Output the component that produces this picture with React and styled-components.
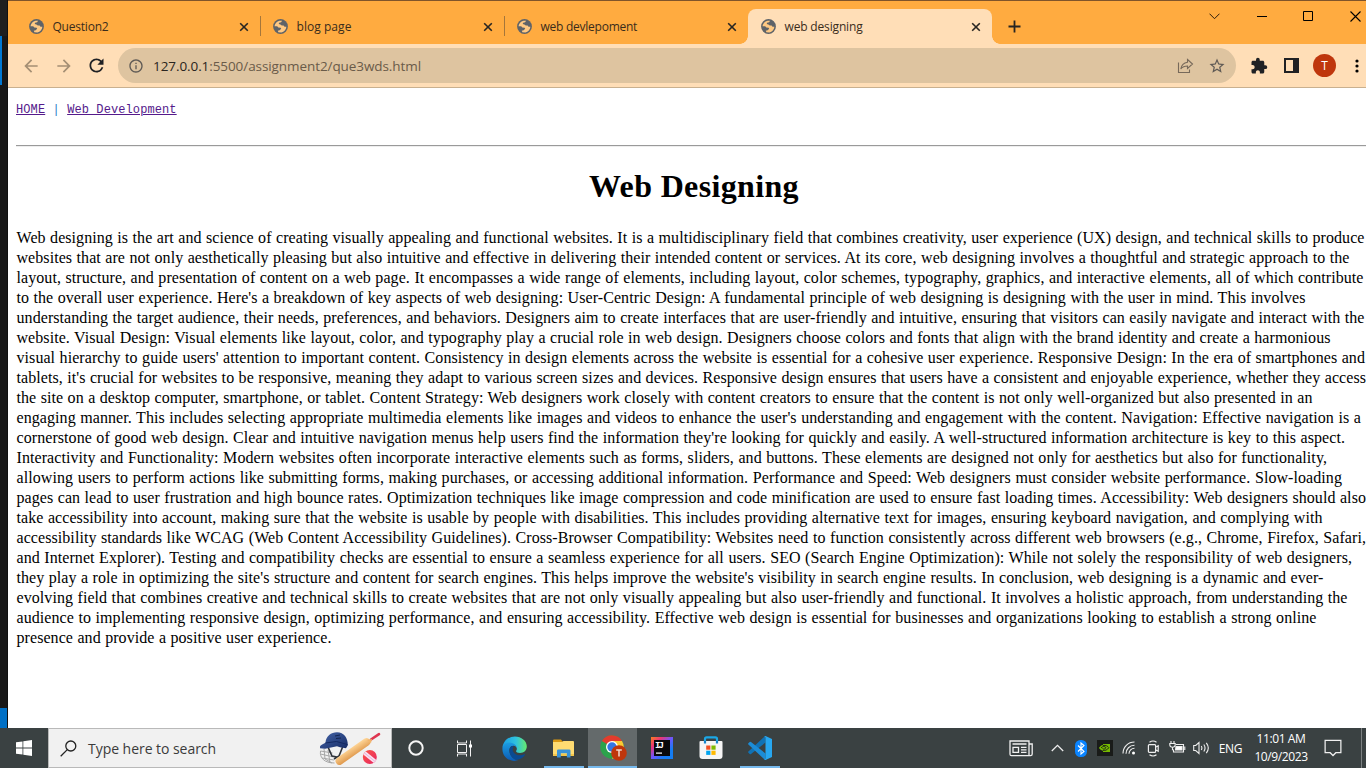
import React from 'react';
import styled, { createGlobalStyle } from 'styled-components';
import { MdExtension, MdStarBorder, MdInfoOutline, MdRefresh, MdArrowBack, MdArrowForward } from 'react-icons/md';

const GlobalStyle = createGlobalStyle`
  * { box-sizing: border-box; }
  body { margin: 0; overflow: hidden; }
`;

const ui = '"Open Sans", "Noto Sans", sans-serif';

const Desktop = styled.div`
  width: 1366px;
  height: 768px;
  overflow: hidden;
  display: flex;
  flex-direction: column;
  font-family: ${ui};
`;

const Workspace = styled.div`
  display: flex;
  height: 728px;
`;

const EditorEdge = styled.div`
  flex: 0 0 8px;
  display: flex;
  flex-direction: column;
  background: #181818;
  border-right: 1px solid #101010;
`;

const EdgeBlock = styled.div`
  height: ${(p) => p.$h}px;
  width: ${(p) => p.$w || 7}px;
  background: ${(p) => p.$bg};
`;

const Browser = styled.div`
  flex: 1;
  min-width: 0;
  display: flex;
  flex-direction: column;
  background: #fff;
`;

const TitleBar = styled.div`
  height: 44px;
  border-top: 1px solid #80542a;
  background: #ffab40;
  display: flex;
  padding: 8px 0 0 8px;
`;

const Tab = styled.div`
  position: relative;
  width: 244px;
  height: 35px;
  display: flex;
  align-items: center;
  padding: 0 10px 0 13px;
  border-radius: 8px 8px 0 0;
  background: ${(p) => (p.$active ? '#ffdeb7' : 'transparent')};

  &::before, &::after {
    content: "";
    display: ${(p) => (p.$active ? 'block' : 'none')};
    position: absolute;
    bottom: 0;
    width: 8px;
    height: 8px;
  }
  &::before { left: -8px; background: radial-gradient(circle at 0 0, transparent 7.5px, #ffdeb7 8px); }
  &::after { right: -8px; background: radial-gradient(circle at 100% 0, transparent 7.5px, #ffdeb7 8px); }
`;

const TabTitle = styled.span`
  flex: 1;
  margin-left: 8.5px;
  font-size: 12px;
  line-height: 16px;
  letter-spacing: ${(p) => p.$track}px;
  color: #3a2c1b;
  white-space: nowrap;
`;

const TabDivider = styled.span`
  position: absolute;
  right: -1px;
  top: 7px;
  width: 1px;
  height: 20px;
  background: #a5763b;
`;

const CloseSlot = styled.span`
  width: 12px;
  height: 12px;
  display: flex;
`;

const NewTab = styled.div`
  width: 45px;
  height: 35px;
  display: flex;
  align-items: center;
  justify-content: center;
`;

const WindowControls = styled.div`
  display: flex;
  margin: -2px -12.5px 0 auto;
`;

const ControlButton = styled.div`
  width: 46.8px;
  height: 18px;
  display: flex;
  align-items: center;
  justify-content: center;
`;

const Toolbar = styled.div`
  height: 44px;
  background: #ffdeb7;
  border-bottom: 1px solid #c9b08f;
  display: flex;
  align-items: center;
  padding-left: 6px;
  overflow: hidden;
`;

const ToolButton = styled.div`
  flex: 0 0 ${(p) => p.$w || 33}px;
  display: flex;
  align-items: center;
  justify-content: center;
  color: ${(p) => (p.$muted ? '#a58f74' : '#202124')};
`;

const AddressBar = styled.div`
  flex: 0 0 1118px;
  height: 35px;
  margin: 0 6px 0 5px;
  border-radius: 18px;
  background: #dec4a0;
  display: flex;
  align-items: center;
  padding: 0 10px;
  color: #5f5a55;
`;

const Url = styled.span`
  flex: 1;
  margin-left: 9px;
  font-size: 13.5px;
  letter-spacing: -0.08px;
  line-height: 20px;
  color: #6a5b49;
  white-space: nowrap;
  b { font-weight: 400; color: #2a2520; }
`;

const AddressActions = styled.div`
  display: flex;
  align-items: center;
  gap: 14px;
`;

const Avatar = styled.div`
  width: 23px;
  height: 23px;
  border-radius: 50%;
  background: #bf360c;
  color: #fff;
  font-size: 12px;
  line-height: 23px;
  text-align: center;
`;

const Page = styled.main`
  flex: 1;
  width: 1364px;
  padding: 14px 0 0 8px;
  color: #000;
  font-family: "Liberation Serif", "Times New Roman", serif;
`;

const PageNav = styled.nav`
  height: 16px;
  font: 12px/16px "Liberation Mono", monospace;
  letter-spacing: 0.1px;
  color: #2b7fc7;
  white-space: pre;
`;

const PageLink = styled.a`
  color: #551a8b;
  text-decoration: underline;
`;

const Rule = styled.div`
  margin-top: 27px;
  height: 2px;
  border-top: 1px solid #9a9a9a;
  border-bottom: 1px solid #eee;
`;

const Heading = styled.h1`
  margin: 19px 0 0;
  height: 40px;
  font-size: 32px;
  line-height: 40px;
  letter-spacing: 0.35px;
  text-align: center;
`;

const Article = styled.article`
  margin-top: 22px;
  padding-left: 0.5px;
`;

const Line = styled.div`
  width: ${(p) => p.$w}px;
  height: 20px;
  font-size: 16px;
  line-height: 20px;
  letter-spacing: 0.07px;
  text-align: justify;
  text-align-last: justify;
`;

const Taskbar = styled.footer`
  height: 40px;
  background: #3a4142;
  display: flex;
  color: #fff;
`;

const TaskSlot = styled.div`
  width: ${(p) => p.$w || 49}px;
  height: 40px;
  display: flex;
  align-items: center;
  justify-content: center;
  background: ${(p) => (p.$active ? '#646a6b' : 'transparent')};
`;

const AppSlot = styled(TaskSlot)`
  position: relative;
  &::after {
    content: "";
    position: absolute;
    bottom: 0;
    left: ${(p) => (p.$active ? 0 : 5)}px;
    right: ${(p) => (p.$active ? 0 : 4)}px;
    height: 2px;
    background: ${(p) => (p.$running ? '#76b9ed' : 'transparent')};
  }
`;

const AppGroup = styled.div`
  display: flex;
  margin-left: 2px;
`;

const SearchBox = styled.div`
  width: 344px;
  height: 40px;
  background: #f1f1f1;
  border: 1px solid #b9b9b9;
  display: flex;
  align-items: center;
  padding: 0 10px 0 11px;
`;

const SearchText = styled.span`
  flex: 1;
  margin-left: 11px;
  font-size: 14px;
  letter-spacing: -0.04px;
  color: #3b3b3b;
`;

const Tray = styled.div`
  margin-left: auto;
  display: flex;
`;

const Lang = styled(TaskSlot)`
  font-size: 12px;
  letter-spacing: -0.3px;
`;

const Clock = styled.div`
  width: 66px;
  padding-top: 2px;
  font-size: 12px;
  line-height: 18px;
  letter-spacing: ${(p) => p.$track || -0.4}px;
  text-align: center;
  white-space: nowrap;
`;

const ShowDesktop = styled.div`
  width: 5px;
  margin-left: 9px;
  border-left: 1px solid #7c8182;
`;

const Globe = () => (
  <svg width="15" height="15" viewBox="0 0 15 15">
    <circle cx="7.5" cy="7.5" r="7.4" fill="#5f6368" />
    <path d="M1.5 7.3C1.8 4.5 3.7 2.5 6.5 1.7L9 1.8 8.2 3.2 6.1 3.8 5.7 5.1 7.4 5.4 8.8 6.6 10.6 6.5 11.5 7.8 13.4 7.8C13.1 10.6 11.2 12.8 8.4 13.5L5.4 13.2 4.8 11.7 6.7 11.3 8.2 9.8 7.6 8.7 5.3 8.4 4.2 7.3Z" fill="#ffc983" />
    <path d="M9.2 2.3L11.8 3.6 13 6.2 11.8 5.6 10.2 5.2 8.3 4.8Z" fill="#5f6368" />
  </svg>
);

const CloseIcon = () => (
  <svg width="12" height="12" viewBox="0 0 12 12" stroke="#272522" strokeWidth="1.6">
    <path d="M2.2 2.2l7.6 7.6M9.8 2.2L2.2 9.8" />
  </svg>
);

const ShareIcon = () => (
  <svg width="17" height="16" viewBox="0 0 17 16" fill="none" stroke="#77695a" strokeWidth="1.1">
    <path d="M1.5 4.5v10h11v-3" />
    <path d="M10.5 1.5l5 4.5-5 4.500V8C7.500 8 5.600 8.700 3.800 11 4.400 7.300 6.700 4.700 10.500 4.200z" />
  </svg>
);

const SearchIcon = () => (
  <svg width="17" height="17" viewBox="0 0 17 17" fill="none" stroke="#222" strokeWidth="1.3">
    <circle cx="10.8" cy="6" r="5" />
    <path d="M7.3 9.6L.7 16.2" />
  </svg>
);

const CricketArt = () => (
  <svg width="62" height="36" viewBox="0 0 62 36">
    <defs>
      <linearGradient id="helmet" x1="0" y1="0" x2="1" y2="1">
        <stop offset="0" stopColor="#4565a8" /><stop offset="1" stopColor="#172c66" />
      </linearGradient>
      <linearGradient id="bat" gradientUnits="userSpaceOnUse" x1="32" y1="17" x2="37" y2="25">
        <stop offset="0" stopColor="#ffd799" /><stop offset="1" stopColor="#e09a4e" />
      </linearGradient>
      <linearGradient id="ball" x1="0" y1="0" x2="1" y2="1">
        <stop offset="0" stopColor="#ff5a45" /><stop offset="1" stopColor="#e22064" />
      </linearGradient>
      <clipPath id="ballEdge"><circle cx="50.800" cy="27" r="7" /></clipPath>
    </defs>
    <g fill="none" stroke="#a7a7a7" strokeWidth="1">
      <path d="M1.500 21c-1 7 4 12 14 12M1.500 24l13 3M3 28l12 2M5 19l1 10 7 4M9 20l2 13M1.500 21l12 2" />
    </g>
    <path d="M9 17l4 9 5 1M24 16l-4 10-5 3" fill="none" stroke="#30343b" strokeWidth="1.600" />
    <path d="M1 17C1 15 4 14.500 6.500 12.500C7 6 12 2.200 18 2.200c7 0 11 5.800 10.800 13l-1.800 3-6-1-3-1-12 2.500-5-.5z" fill="url(#helmet)" />
    <path d="M6.500 13l11-1.500 11 3" fill="none" stroke="#142a62" strokeWidth="1" />
    <path d="M16 6l5-1M17 8.500l5-.5" stroke="#142650" strokeWidth="1" />
    <path d="M52 9.500l8-5.300" stroke="#de3650" strokeWidth="2.600" strokeLinecap="round" />
    <path d="M20.500 31L47.500 12" stroke="url(#bat)" strokeWidth="7.800" strokeLinecap="round" />
    <path d="M48 10l5-1-1 4z" fill="#f2b66b" />
    <g clipPath="url(#ballEdge)">
      <path d="M43 19h16v16H43z" fill="url(#ball)" />
      <path d="M43 21l15 12" stroke="#fbe0f0" strokeWidth="4" />
      <path d="M43 21l15 12" stroke="#dba0d0" strokeWidth=".7" />
    </g>
  </svg>
);

const EdgeIcon = () => (
  <svg width="25" height="25" viewBox="0 0 256 256">
    <defs>
      <linearGradient id="e1" x1="0" y1="0" x2="1" y2="0"><stop offset="0" stopColor="#1b9de2" /><stop offset=".55" stopColor="#2fc2df" /><stop offset="1" stopColor="#66eb6e" /></linearGradient>
      <linearGradient id="e2" x1="0" y1="0" x2="0" y2="1"><stop offset="0" stopColor="#1b9de2" /><stop offset="1" stopColor="#0c5bb5" /></linearGradient>
    </defs>
    <path d="M5 118C14 45 72 4 132 4c66 0 122 45 122 102 0 43-31 68-69 68-28 0-44-10-41-19 4-7 8-13 8-24 0-27-29-47-62-47-39 0-70 15-85 34z" fill="url(#e1)" />
    <path d="M5 118c10-38 46-56 85-50 36 5 62 29 62 61 0-19-17-29-33-29-29 0-46 23-44 48 4 56 43 94 91 99-11 5-26 8-40 8C55 254-3 195 5 118z" fill="url(#e2)" />
    <path d="M95 106c-34 33-20 105 32 131 38 19 86-9 109-44 4-5-1-9-6-6-53 27-117 1-121-47-1-12 3-23 10-31-9-7-18-8-24-3z" fill="#0a4a92" />
  </svg>
);

const FolderIcon = () => (
  <svg width="22" height="19" viewBox="0 0 22 19">
    <path d="M0 1.5Q0 .5 1 .5h7l2 2.5H0z" fill="#dc9a13" />
    <path d="M0 3h9l1.5-1H20q1 0 1 1v14H0z" fill="#ffdc72" />
    <path d="M0 15h21v2H0z" fill="#f3c54a" />
    <path d="M4 18.5v-6.700q0-1.200 1.200-1.200h11q1.300 0 1.300 1.200v6.700h-3.600v-4.200H7.800v4.200z" fill="#3992d8" />
  </svg>
);

const ChromeIcon = () => (
  <svg width="28" height="28" viewBox="0 0 28 28">
    <circle cx="13" cy="13" r="11.7" fill="#2ba24c" />
    <path d="M13 13L2.9 7.1A11.7 11.7 0 0 1 23.2 7.2z" fill="#e33b2e" />
    <path d="M13 7h10A11.7 11.7 0 0 1 13 24.7L18.5 15z" fill="#fcc934" />
    <circle cx="13" cy="13" r="6" fill="#fff" />
    <circle cx="13" cy="13" r="4.7" fill="#3376e4" />
    <circle cx="20" cy="19" r="7.8" fill="#bf360c" />
    <path d="M17.2 16h5.600M20 16v6.500" stroke="#f3d9d0" strokeWidth="1.500" />
  </svg>
);

const IdeaText = styled.text`
  font: bold 9px "Liberation Mono", monospace;
  fill: #fff;
`;

const IdeaIcon = () => (
  <svg width="22" height="22" viewBox="0 0 22 22">
    <defs><linearGradient id="ij" x1="0" y1="0" x2="1" y2="1"><stop offset="0" stopColor="#fc801d" /><stop offset=".25" stopColor="#eb3576" /><stop offset=".5" stopColor="#6b57ff" /><stop offset=".75" stopColor="#147df4" /></linearGradient></defs>
    <rect width="22" height="22" fill="url(#ij)" />
    <rect x="3" y="3" width="16" height="16" fill="#090909" />
    <IdeaText x="4" y="11" textLength="9">IJ</IdeaText>
    <rect x="5" y="15.5" width="6" height="1.2" fill="#fff" />
  </svg>
);

const StoreIcon = () => (
  <svg width="24" height="24" viewBox="0 0 24 24">
    <path d="M6 7V3q0-1.6 1.6-1.6h8.8Q18 1.400 18 3v4" fill="none" stroke="#1ba7e5" strokeWidth="2.2" />
    <path d="M1.500 5h21Q23.500 5 23.500 6v14q0 3-3 3h-17q-3 0-3-3V6q0-1 1-1z" fill="#f5f5f5" />
    <path d="M6 5v2.500M18 5v2.500" stroke="#1684cc" strokeWidth="2.200" />
    <path d="M7.200 9.500h4.200v4.200H7.200z" fill="#f25022" />
    <path d="M12.400 9.500h4.200v4.200h-4.200z" fill="#7fba00" />
    <path d="M7.200 14.700h4.200v4.200H7.200z" fill="#00a4ef" />
    <path d="M12.400 14.700h4.200v4.200h-4.200z" fill="#ffb900" />
  </svg>
);

const CodeIcon = () => (
  <svg width="24" height="24" viewBox="0 0 24 24">
    <path d="M17.500 6.500L3 17.900q-.7.500-1.300 0L.4 16.700q-.6-.6 0-1.200L16.500.6q.5-.5 1-.6z" fill="#1072b5" />
    <path d="M17.500 17.500L3 6.100q-.7-.5-1.300 0L.4 7.300q-.6.600 0 1.200l16.100 14.900q.5.500 1 .6z" fill="#1c8cd6" />
    <path d="M17.500 0L24 3v18l-6.500 3q-.9-.2-1.300-.8 1.300.4 1.300-1V1.800q0-1.300-1.300-1 .6-.6 1.300-.8z" fill="#27a7f0" />
  </svg>
);

const TaskViewIcon = () => (
  <svg width="17" height="17" viewBox="0 0 17 17" fill="none" stroke="#f2f2f2">
    <path d="M1.500 .5v2.500h9V.5M1.500 4.500h9v8h-9zM1.500 16.500V14h9v2.500M14.500 .5v16" />
    <path d="M13 4.500h3v3h-3z" fill="#fff" stroke="none" />
  </svg>
);

const NewsIcon = () => (
  <svg width="24" height="17" viewBox="0 0 24 17" fill="none" stroke="#f0f0f0" strokeWidth="1.3">
    <path d="M20 15.700V1H1v13.200q0 1.500 1.500 1.500h19q1.700 0 1.700-1.700V4H20M3.500 4h14M12 7.300h5.500M12 9.800h5.500M12 12.300h5.500" />
    <path d="M4 7.300h5.500v5H4z" />
  </svg>
);

const BluetoothIcon = () => (
  <svg width="12" height="17" viewBox="0 0 12 17">
    <rect width="12" height="17" rx="5.500" fill="#0a84ff" />
    <path d="M3 5.500l6 6L6 14V3l3 2.500-6 6" fill="none" stroke="#fff" strokeWidth="1.1" />
  </svg>
);

const NvidiaIcon = () => (
  <svg width="16" height="16" viewBox="0 0 16 16">
    <rect width="16" height="16" fill="#191b19" />
    <path d="M6 4h7v8H6v-1.200C4 10.500 2.400 9 2 7.800 3.200 6 4.500 5.200 6 5z" fill="#76b900" />
    <path d="M6 5.500c3-.6 5 .8 5.800 2.200C10.300 10 8 10.800 6 10.300M4 8c1.500-2 3.800-2 5-.3C8 9.300 6.700 9.400 5.500 8.500" fill="none" stroke="#191b19" strokeWidth=".9" />
  </svg>
);

const WifiIcon = () => (
  <svg width="14" height="14" viewBox="0 0 14 14" fill="none" stroke="#eee" strokeWidth="1.100">
    <path d="M1 12.500C1 6 6 1 12.500 1M4 12.800c0-4.800 3.700-8.500 8.500-8.500M7 12.800c0-3 2.500-5.500 5.500-5.500" />
    <circle cx="11.500" cy="12" r="1.500" fill="#fff" stroke="none" />
  </svg>
);

const MeetIcon = () => (
  <svg width="13" height="17" viewBox="0 0 13 17" fill="none" stroke="#eee" strokeWidth="1.200">
    <path d="M2.500 2.200Q6 -.2 9.500 2.200M2.500 14.800q3.500 2.400 7 0M2.300 4.600h5.400q.9 0 .9.900v6q0 .9-.9.900H2.300q-.9 0-.9-.9v-6q0-.9.900-.9zM8.600 7.300l2.600-1.500v5.400L8.600 9.700" />
  </svg>
);

const BatteryIcon = () => (
  <svg width="17" height="14" viewBox="0 0 17 14" fill="none" stroke="#eee" strokeWidth="1.100">
    <path d="M7 3.500h7.500v7.500H4.500V8.500M15.800 5.500v3.500" />
    <path d="M7 5.500h6v3.500H6.500z" fill="#fff" />
    <path d="M2 0v2.500M5 0v2.500M.8 2.500h5.400v1.500Q6 6.200 3.500 6.200T.8 4zM3.500 6.200v3" />
  </svg>
);

const SpeakerIcon = () => (
  <svg width="17" height="14" viewBox="0 0 17 14" fill="none" stroke="#eee" strokeWidth="1.100">
    <path d="M.7 4.500h2L6 1.500v11l-3.300-3h-2zM8.300 5q1.200 2 0 4M10.800 3.500q2.500 3.500 0 7M13.300 1.800q4 5.200 0 10.400" />
  </svg>
);

const tabs = [
  { title: 'Question2', track: -0.22, divider: true },
  { title: 'blog page', track: 0.05, divider: true },
  { title: 'web devlepoment', track: -0.25 },
  { title: 'web designing', track: -0.16, active: true },
];

const lines = [
  [1348, 'Web designing is the art and science of creating visually appealing and functional websites. It is a multidisciplinary field that combines creativity, user experience (UX) design, and technical skills to produce'],
  [1333, 'websites that are not only aesthetically pleasing but also intuitive and effective in delivering their intended content or services. At its core, web designing involves a thoughtful and strategic approach to the'],
  [1347, 'layout, structure, and presentation of content on a web page. It encompasses a wide range of elements, including layout, color schemes, typography, graphics, and interactive elements, all of which contribute'],
  [1289, "to the overall user experience. Here's a breakdown of key aspects of web designing: User-Centric Design: A fundamental principle of web designing is designing with the user in mind. This involves"],
  [1348, 'understanding the target audience, their needs, preferences, and behaviors. Designers aim to create interfaces that are user-friendly and intuitive, ensuring that visitors can easily navigate and interact with the'],
  [1314, 'website. Visual Design: Visual elements like layout, color, and typography play a crucial role in web design. Designers choose colors and fonts that align with the brand identity and create a harmonious'],
  [1348.5, "visual hierarchy to guide users' attention to important content. Consistency in design elements across the website is essential for a cohesive user experience. Responsive Design: In the era of smartphones and"],
  [1349.5, "tablets, it's crucial for websites to be responsive, meaning they adapt to various screen sizes and devices. Responsive design ensures that users have a consistent and enjoyable experience, whether they access"],
  [1296, 'the site on a desktop computer, smartphone, or tablet. Content Strategy: Web designers work closely with content creators to ensure that the content is not only well-organized but also presented in an'],
  [1344.5, "engaging manner. This includes selecting appropriate multimedia elements like images and videos to enhance the user's understanding and engagement with the content. Navigation: Effective navigation is a"],
  [1328.5, "cornerstone of good web design. Clear and intuitive navigation menus help users find the information they're looking for quickly and easily. A well-structured information architecture is key to this aspect."],
  [1310.5, 'Interactivity and Functionality: Modern websites often incorporate interactive elements such as forms, sliders, and buttons. These elements are designed not only for aesthetics but also for functionality,'],
  [1325.5, 'allowing users to perform actions like submitting forms, making purchases, or accessing additional information. Performance and Speed: Web designers must consider website performance. Slow-loading'],
  [1349.5, 'pages can lead to user frustration and high bounce rates. Optimization techniques like image compression and code minification are used to ensure fast loading times. Accessibility: Web designers should also'],
  [1306, 'take accessibility into account, making sure that the website is usable by people with disabilities. This includes providing alternative text for images, ensuring keyboard navigation, and complying with'],
  [1349.5, 'accessibility standards like WCAG (Web Content Accessibility Guidelines). Cross-Browser Compatibility: Websites need to function consistently across different web browsers (e.g., Chrome, Firefox, Safari,'],
  [1335.5, 'and Internet Explorer). Testing and compatibility checks are essential to ensure a seamless experience for all users. SEO (Search Engine Optimization): While not solely the responsibility of web designers,'],
  [1307, "they play a role in optimizing the site's structure and content for search engines. This helps improve the website's visibility in search engine results. In conclusion, web designing is a dynamic and ever-"],
  [1331, 'evolving field that combines creative and technical skills to create websites that are not only visually appealing but also user-friendly and functional. It involves a holistic approach, from understanding the'],
  [1300, 'audience to implementing responsive design, optimizing performance, and ensuring accessibility. Effective web design is essential for businesses and organizations looking to establish a strong online'],
  [315, 'presence and provide a positive user experience.'],
];

export default function App() {
  return (
    <Desktop>
      <GlobalStyle />
      <Workspace>
        <EditorEdge>
          <EdgeBlock $h={36} $bg="#1f1f1f" />
          <EdgeBlock $h={49} $w={2} $bg="#0078d4" />
          <EdgeBlock $h={623} $bg="#181818" />
          <EdgeBlock $h={20} $bg="#0070c6" />
        </EditorEdge>
        <Browser>
          <TitleBar>
            {tabs.map((t) => (
              <Tab key={t.title} $active={t.active}>
                <Globe />
                <TabTitle $track={t.track}>{t.title}</TabTitle>
                <CloseSlot><CloseIcon /></CloseSlot>
                {t.divider && <TabDivider />}
              </Tab>
            ))}
            <NewTab>
              <svg width="13" height="13" viewBox="0 0 13 13" stroke="#272522" strokeWidth="1.800"><path d="M6.500 .5v12M.5 6.500h12" /></svg>
            </NewTab>
            <WindowControls>
              <ControlButton><svg width="11" height="7" viewBox="0 0 11 7" fill="none" stroke="#2a1c0b"><path d="M.5 .7l5 5 5-5" /></svg></ControlButton>
              <ControlButton><svg width="10" height="10" viewBox="0 0 10 10" stroke="#000"><path d="M0 5.500h10" /></svg></ControlButton>
              <ControlButton><svg width="10" height="10" viewBox="0 0 10 10" fill="none" stroke="#000"><path d="M.5 .5h9v9h-9z" /></svg></ControlButton>
              <ControlButton><svg width="11" height="11" viewBox="0 0 11 11" stroke="#000" strokeWidth="1.100"><path d="M.5 .5l10 10M10.500 .5l-10 10" /></svg></ControlButton>
            </WindowControls>
          </TitleBar>
          <Toolbar>
            <ToolButton $muted><MdArrowBack size={20} /></ToolButton>
            <ToolButton $muted><MdArrowForward size={20} /></ToolButton>
            <ToolButton><MdRefresh size={21} /></ToolButton>
            <AddressBar>
              <MdInfoOutline size={16} />
              <Url><b>127.0.0.1</b>:5500/assignment2/que3wds.html</Url>
              <AddressActions>
                <ShareIcon />
                <MdStarBorder size={18} />
              </AddressActions>
            </AddressBar>
            <ToolButton><MdExtension size={18} /></ToolButton>
            <ToolButton><svg width="15" height="15" viewBox="0 0 15 15"><path d="M0 0h15v15H0zM2 2v11h7V2z" fill="#202124" fillRule="evenodd" /></svg></ToolButton>
            <ToolButton><Avatar>T</Avatar></ToolButton>
            <ToolButton $w={31}><svg width="4" height="14" viewBox="0 0 4 14"><circle cx="2" cy="2" r="1.600" /><circle cx="2" cy="7" r="1.600" /><circle cx="2" cy="12" r="1.600" /></svg></ToolButton>
          </Toolbar>
          <Page>
            <PageNav><PageLink>HOME</PageLink> | <PageLink>Web Development</PageLink></PageNav>
            <Rule />
            <Heading>Web Designing</Heading>
            <Article>
              {lines.map(([w, text]) => <Line key={text} $w={w}>{text}</Line>)}
            </Article>
          </Page>
        </Browser>
      </Workspace>
      <Taskbar>
        <TaskSlot $w={48}>
          <svg width="16" height="16" viewBox="0 0 16 16" fill="#fff"><path d="M0 2.300l6.500-.9v6.200H0zM7.300 1.300L16 0v7.600H7.300zM0 8.400h6.500v6.200L0 13.700zM7.300 8.400H16V16l-8.700-1.300z" /></svg>
        </TaskSlot>
        <SearchBox>
          <SearchIcon />
          <SearchText>Type here to search</SearchText>
          <CricketArt />
        </SearchBox>
        <TaskSlot $w={48}><svg width="16" height="16" viewBox="0 0 16 16"><circle cx="8" cy="8" r="6.700" fill="none" stroke="#f5f5f5" strokeWidth="2" /></svg></TaskSlot>
        <TaskSlot $w={48}><TaskViewIcon /></TaskSlot>
        <AppGroup>
          <AppSlot><EdgeIcon /></AppSlot>
          <AppSlot $running><FolderIcon /></AppSlot>
          <AppSlot $running $active><ChromeIcon /></AppSlot>
          <AppSlot><IdeaIcon /></AppSlot>
          <AppSlot><StoreIcon /></AppSlot>
          <AppSlot $running><CodeIcon /></AppSlot>
        </AppGroup>
        <Tray>
          <TaskSlot $w={48}><NewsIcon /></TaskSlot>
          <TaskSlot $w={24}><svg width="13" height="8" viewBox="0 0 13 8" fill="none" stroke="#eee" strokeWidth="1.300"><path d="M.8 7l5.700-5.700L12.200 7" /></svg></TaskSlot>
          <TaskSlot $w={24}><BluetoothIcon /></TaskSlot>
          <TaskSlot $w={24}><NvidiaIcon /></TaskSlot>
          <TaskSlot $w={24}><WifiIcon /></TaskSlot>
          <TaskSlot $w={24}><MeetIcon /></TaskSlot>
          <TaskSlot $w={24}><BatteryIcon /></TaskSlot>
          <TaskSlot $w={24}><SpeakerIcon /></TaskSlot>
          <Lang $w={35}>ENG</Lang>
          <Clock>11:01 AM<br />10/9/2023</Clock>
          <TaskSlot $w={38}><svg width="20" height="18" viewBox="0 0 17 16" fill="none" stroke="#f0f0f0" strokeWidth="1.100"><path d="M1.500 1.200h14v11h-4.500L8.500 14.700 6 12.200h-4.500z" /></svg></TaskSlot>
          <ShowDesktop />
        </Tray>
      </Taskbar>
    </Desktop>
  );
}
